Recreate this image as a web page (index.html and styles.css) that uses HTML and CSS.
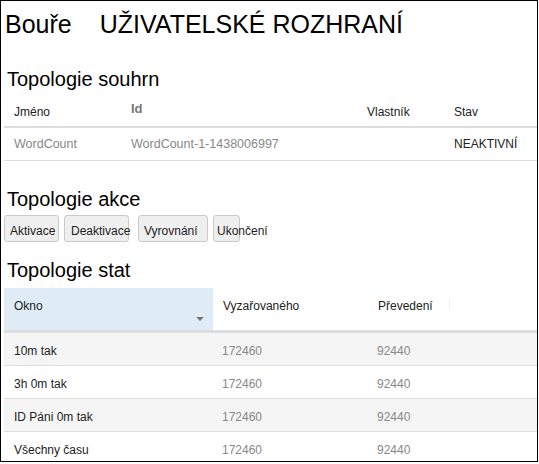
FILE: index.html
```html
<!DOCTYPE html>
<html lang="cs">
<head>
<meta charset="utf-8">
<title>Bouře UŽIVATELSKÉ ROZHRANÍ</title>
<link rel="stylesheet" href="styles.css">
</head>
<body>
<div class="frame">
  <h1 class="title"><span>Bouře</span><span>UŽIVATELSKÉ ROZHRANÍ</span></h1>

  <h2 class="section section-summary">Topologie souhrn</h2>
  <table class="summary">
    <colgroup>
      <col class="c-name"><col class="c-id"><col class="c-owner"><col class="c-state">
    </colgroup>
    <thead>
      <tr><th>Jméno</th><th class="id">Id</th><th>Vlastník</th><th>Stav</th></tr>
    </thead>
    <tbody>
      <tr><td class="muted">WordCount</td><td class="muted">WordCount-1-1438006997</td><td></td><td>NEAKTIVNÍ</td></tr>
    </tbody>
  </table>

  <h2 class="section section-actions">Topologie akce</h2>
  <div class="actions">
    <button class="btn btn-activate">Aktivace</button>
    <button class="btn btn-deactivate">Deaktivace</button>
    <button class="btn btn-rebalance">Vyrovnání</button>
    <button class="btn btn-kill">Ukončení</button>
  </div>

  <h2 class="section section-stats">Topologie stat</h2>
  <table class="stats">
    <colgroup>
      <col class="s-window"><col class="s-emitted"><col class="s-transferred"><col class="s-rest">
    </colgroup>
    <thead>
      <tr>
        <th class="sorted">Okno<span class="caret"></span></th>
        <th>Vyzařovaného</th>
        <th>Převedení</th>
        <th class="handle"></th>
      </tr>
    </thead>
    <tbody>
      <tr><td class="label">10m tak</td><td class="num">172460</td><td class="num">92440</td><td></td></tr>
      <tr><td class="label">3h 0m tak</td><td class="num">172460</td><td class="num">92440</td><td></td></tr>
      <tr><td class="label">ID Páni 0m tak</td><td class="num">172460</td><td class="num">92440</td><td></td></tr>
      <tr><td class="label">Všechny času</td><td class="num">172460</td><td class="num">92440</td><td></td></tr>
    </tbody>
  </table>
</div>
</body>
</html>
```

FILE: styles.css
```css
* { box-sizing: border-box; }
html, body { margin: 0; padding: 0; }
body {
  font-family: "Liberation Sans", Arial, sans-serif;
  color: #222;
  background: #fff;
}

.frame {
  width: 538px;
  height: 462px;
  border: 1px solid #000;
  padding: 0 0 0 3px;
  overflow: hidden;
}

.title {
  margin: 9px 0 0 1px;
  font-size: 25px;
  font-weight: normal;
  line-height: 28px;
  display: flex;
  gap: 28px;
  color: #000;
}

.section {
  margin: 0;
  padding-left: 3px;
  font-size: 20px;
  font-weight: normal;
  line-height: 24px;
  color: #000;
}
.section-summary { margin-top: 29px; }
.section-actions { margin-top: 26px; }
.section-stats { margin-top: 16px; }

table {
  border-collapse: separate;
  border-spacing: 0;
  width: 533px;
  table-layout: fixed;
  font-size: 12px;
  line-height: 18px;
}

/* summary table */
.c-name { width: 117px; }
.c-id { width: 236px; }
.c-owner { width: 87px; }
.c-state { width: 93px; }

.summary th {
  height: 35px;
  text-align: left;
  font-weight: normal;
  padding: 12px 10px 5px;
  vertical-align: bottom;
  border-bottom: 2px solid #ddd;
  color: #222;
}
.summary th.id {
  font-weight: bold;
  font-size: 13px;
  color: #777;
  padding-top: 9px;
  padding-bottom: 8px;
}
.summary td {
  padding: 7px 10px;
  border-bottom: 1px solid #ddd;
  white-space: nowrap;
}
.muted { color: #888; font-size: 12.5px; }

/* actions */
.actions {
  display: flex;
  margin-top: 4px;
}
.btn {
  height: 27px;
  padding: 6px 0 1px 5px;
  margin: 0 5px 0 0;
  border: 1px solid #cacaca;
  border-radius: 3px;
  background: #efefef;
  font-family: "Liberation Sans", Arial, sans-serif;
  font-size: 12px;
  line-height: 18px;
  color: #222;
  text-align: left;
  white-space: nowrap;
  overflow: visible;
}
.btn-activate { width: 55px; }
.btn-deactivate { width: 65px; padding-left: 6px; }
.btn-rebalance { width: 70px; margin-left: 4px; }
.btn-kill { width: 27px; padding-left: 3px; }

/* stats table */
.stats { margin-top: 6px; }
.s-window { width: 209px; }
.s-emitted { width: 155px; }
.s-transferred { width: 81px; }
.s-rest { width: 88px; }

.stats th {
  position: relative;
  text-align: left;
  font-weight: normal;
  padding: 9px 10px 15px;
  border-bottom: 3px solid #ddd;
  color: #222;
}
.stats th.sorted { background: #dfecf5; }
.caret {
  position: absolute;
  right: 9px;
  bottom: 9px;
  width: 0;
  height: 0;
  border-left: 4px solid transparent;
  border-right: 4px solid transparent;
  border-top: 4px solid #777;
}
.stats th.handle::before {
  content: "";
  position: absolute;
  left: 0;
  top: 10px;
  width: 1px;
  height: 10px;
  background: #e2f2f7;
}
.stats td {
  padding: 9px 10px 5px;
  border-bottom: 1px solid #ddd;
  white-space: nowrap;
}
.stats tbody tr:nth-child(odd) td { background: #f5f5f5; }
.stats td.label { color: #222; }
.stats td.num { color: #888; padding-left: 9px; }
```
